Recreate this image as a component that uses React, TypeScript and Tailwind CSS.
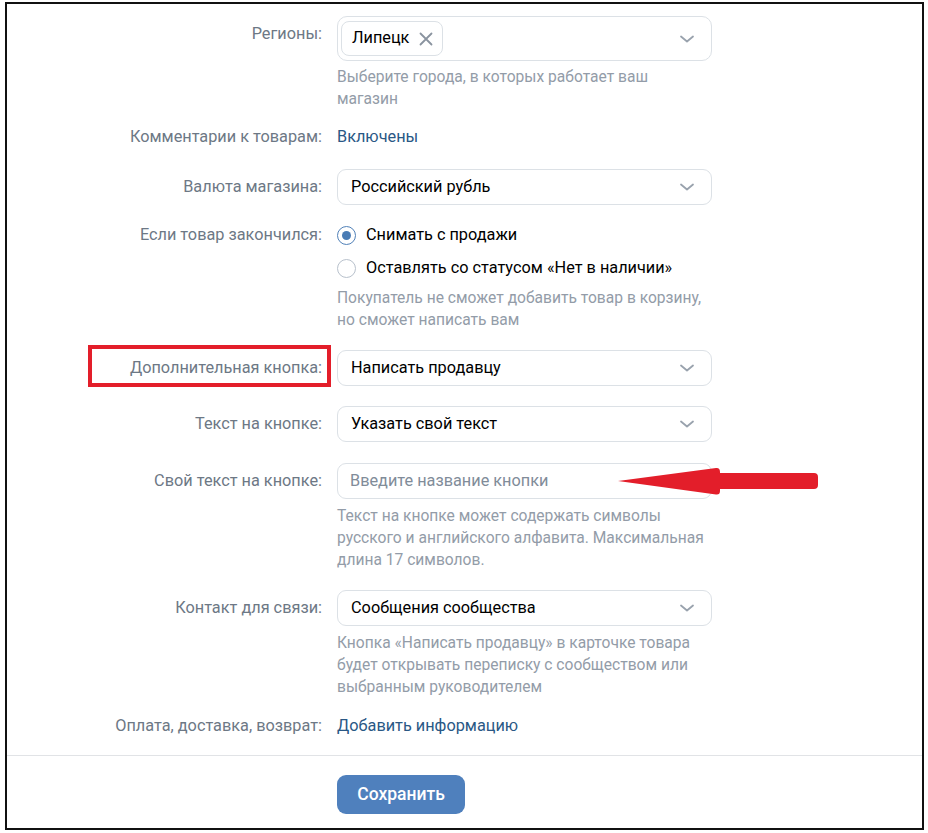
import React from 'react';

function Chevron() {
  return (
    <svg width="16" height="10" viewBox="0 0 16 10" fill="none" className="shrink-0">
      <path d="M2 2.5l6 5 6-5" stroke="#99a2ad" strokeWidth="1.8" strokeLinecap="round" strokeLinejoin="round" />
    </svg>
  );
}

function Select({ value }: { value: string }) {
  return (
    <div className="h-[36px] w-[375px] rounded-[9px] border border-[#dce1e6] bg-white flex items-center justify-between pl-[13px] pr-[16px]">
      <span className="text-[16.3px] text-black">{value}</span>
      <Chevron />
    </div>
  );
}

function Row({ label, className, children }: { label: string; className?: string; children: React.ReactNode }) {
  return (
    <div className={'flex gap-[15px] ' + (className ?? '')}>
      <div className="w-[315px] shrink-0 text-right text-[16.3px] leading-[20px] text-[#6d7885] pt-[8px]">{label}</div>
      <div className="w-[375px]">{children}</div>
    </div>
  );
}

function Hint({ children }: { children: React.ReactNode }) {
  return <div className="text-[15.6px] leading-[22px] text-[#939ca8]">{children}</div>;
}

function Radio({ checked, label }: { checked?: boolean; label: string }) {
  return (
    <div className="flex items-center h-[20px] gap-[10px]">
      <span
        className={
          checked
            ? 'w-[19px] h-[19px] rounded-full border-[1.5px] border-[#5181b8] flex items-center justify-center'
            : 'w-[19px] h-[19px] rounded-full border-[1.5px] border-[#b8c1cc]'
        }
      >
        {checked && <span className="w-[9px] h-[9px] rounded-full bg-[#4a7cb5]" />}
      </span>
      <span className="text-[16.3px] text-black">{label}</span>
    </div>
  );
}

export default function App() {
  return (
    <div className="w-[928px] h-[833px] bg-white relative" style={{ fontFamily: 'Roboto, "Noto Sans", sans-serif' }}>
      <div className="absolute left-[5px] top-[2px] w-[919px] h-[828px] border-2 border-[#111] flex flex-col">
        <div className="pt-[12px]">
          <Row label="Регионы:">
            <div className="h-[45px] w-[375px] rounded-[10px] border border-[#dce1e6] flex items-center justify-between pl-[3px] pr-[16px]">
              <div className="h-[35px] w-[102px] rounded-[8px] border border-[#dce1e6] flex items-center pl-[10px] gap-[9px]">
                <span className="text-[16.3px] text-black">Липецк</span>
                <svg width="16" height="16" viewBox="0 0 16 16" fill="none">
                  <path d="M2.5 2.5l11 11M13.5 2.5l-11 11" stroke="#8a939f" strokeWidth="1.8" strokeLinecap="round" />
                </svg>
              </div>
              <Chevron />
            </div>
            <div className="mt-[5px]">
              <Hint>
                Выберите города, в которых работает ваш
                <br />
                магазин
              </Hint>
            </div>
          </Row>

          <div className="flex gap-[15px] mt-[17px] items-center">
            <div className="w-[315px] shrink-0 text-right text-[16.3px] leading-[20px] text-[#6d7885]">Комментарии к товарам:</div>
            <div className="text-[16.3px] leading-[20px] text-[#2a5885]">Включены</div>
          </div>

          <Row label="Валюта магазина:" className="mt-[22px]">
            <Select value="Российский рубль" />
          </Row>

          <div className="flex gap-[15px] mt-[20px]">
            <div className="w-[315px] shrink-0 text-right text-[16.3px] leading-[20px] text-[#6d7885]">Если товар закончился:</div>
            <div className="w-[375px]">
              <Radio checked label="Снимать с продажи" />
              <div className="mt-[13px]">
                <Radio label="Оставлять со статусом «Нет в наличии»" />
              </div>
              <div className="mt-[9px]">
                <Hint>
                  Покупатель не сможет добавить товар в корзину,
                  <br />
                  но сможет написать вам
                </Hint>
              </div>
            </div>
          </div>

          <Row label="Дополнительная кнопка:" className="mt-[19px]">
            <Select value="Написать продавцу" />
          </Row>

          <Row label="Текст на кнопке:" className="mt-[20px]">
            <Select value="Указать свой текст" />
          </Row>

          <Row label="Свой текст на кнопке:" className="mt-[21px]">
            <div className="h-[36px] w-[375px] rounded-[9px] border border-[#dce1e6] bg-white flex items-center pl-[12px]">
              <span className="text-[16.3px] text-[#818c99]">Введите название кнопки</span>
            </div>
            <div className="mt-[6px]">
              <Hint>
                Текст на кнопке может содержать символы
                <br />
                русского и английского алфавита. Максимальная
                <br />
                длина 17 символов.
              </Hint>
            </div>
          </Row>

          <Row label="Контакт для связи:" className="mt-[19px]">
            <Select value="Сообщения сообщества" />
            <div className="mt-[6px]">
              <Hint>
                Кнопка «Написать продавцу» в карточке товара
                <br />
                будет открывать переписку с сообществом или
                <br />
                выбранным руководителем
              </Hint>
            </div>
          </Row>

          <div className="flex gap-[15px] mt-[18px] items-center">
            <div className="w-[315px] shrink-0 text-right text-[16.3px] leading-[20px] text-[#6d7885]">Оплата, доставка, возврат:</div>
            <div className="text-[16.3px] leading-[20px] text-[#2a5885]">Добавить информацию</div>
          </div>
        </div>

        <div className="mt-[19px] border-t border-[#e1e3e6]" />

        <div className="pl-[330px] pt-[19px]">
          <button className="h-[39px] w-[128px] rounded-[9px] bg-[#4f80bd] text-white text-[17.5px] font-medium">
            Сохранить
          </button>
        </div>
      </div>

      <div className="absolute left-[88px] top-[345px] w-[243px] h-[42px] border-[4px] border-[#e31e2a]" />

      <svg className="absolute left-[612px] top-[464px]" width="212" height="34" viewBox="0 0 212 34">
        <path
          d="M6 17 L104 4 Q108 3.5 108 8 L108 9 L202 9 Q206 9 206 13 L206 21 Q206 25 202 25 L108 25 L108 27 Q108 31 104 30.5 Z"
          fill="#e31e2a"
        />
      </svg>
    </div>
  );
}
